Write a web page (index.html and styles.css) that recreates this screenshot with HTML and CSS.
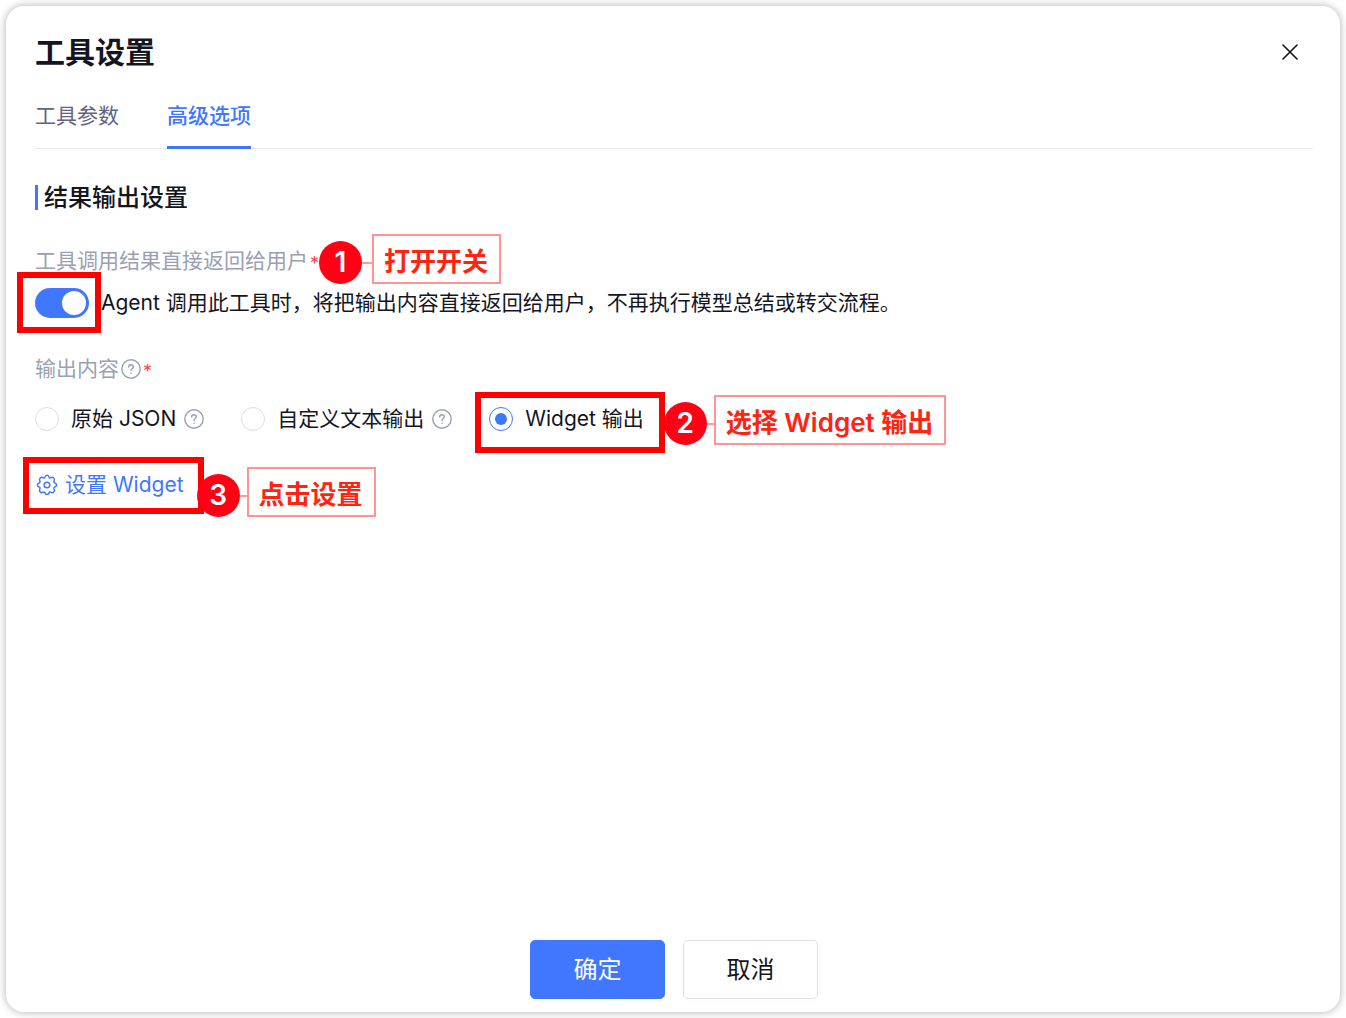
FILE: index.html
```html
<!DOCTYPE html>
<html lang="zh-CN">
<head>
  <meta charset="UTF-8">
  <meta name="viewport" content="width=device-width, initial-scale=1.0">
  <title>工具设置</title>
  <link rel="stylesheet" href="styles.css">
</head>
<body>
  <main class="dialog">
    <header class="dialog-header">
      <h1>工具设置</h1>
      <button class="close-btn" type="button" aria-label="关闭">
        <svg width="16" height="16" viewBox="0 0 16 16" fill="none" stroke="currentColor" stroke-width="1.6" stroke-linecap="round">
          <path d="M1 1l14 14M15 1L1 15"/>
        </svg>
      </button>
    </header>

    <nav class="tabs">
      <a href="#params" class="tab">工具参数</a>
      <a href="#advanced" class="tab active">高级选项</a>
    </nav>

    <section class="settings">
      <h2>结果输出设置</h2>

      <div class="field">
        <div class="field-label">
          <label for="direct-return">工具调用结果直接返回给用户</label>
          <span class="required">*</span>
          <div class="callout callout-switch">
            <span class="badge">1</span>
            <span class="line"></span>
            <span class="tip">打开开关</span>
          </div>
        </div>
        <div class="switch-row">
          <span class="marked marked-switch">
            <input class="switch" type="checkbox" role="switch" id="direct-return" checked>
          </span>
          <span>Agent 调用此工具时，将把输出内容直接返回给用户，不再执行模型总结或转交流程。</span>
        </div>
      </div>

      <div class="field">
        <div class="field-label">
          <span>输出内容</span>
          <svg class="help" width="20" height="20" viewBox="0 0 20 20" fill="none" stroke="currentColor" stroke-width="1.4" stroke-linecap="round" stroke-linejoin="round">
            <circle cx="10" cy="10" r="9.2"/>
            <path d="M7.7 8.1C7.7 6.7 8.7 5.8 10 5.8s2.3.9 2.3 2.1c0 1.6-2.3 1.8-2.3 3.6M10 14.1v.2"/>
          </svg>
          <span class="required">*</span>
        </div>
        <div class="radio-row">
          <div class="option">
            <input class="radio" type="radio" name="output" id="output-json">
            <label for="output-json">原始 JSON</label>
            <svg class="help" width="20" height="20" viewBox="0 0 20 20" fill="none" stroke="currentColor" stroke-width="1.4" stroke-linecap="round" stroke-linejoin="round">
              <circle cx="10" cy="10" r="9.2"/>
              <path d="M7.7 8.1C7.7 6.7 8.7 5.8 10 5.8s2.3.9 2.3 2.1c0 1.6-2.3 1.8-2.3 3.6M10 14.1v.2"/>
            </svg>
          </div>
          <div class="option">
            <input class="radio" type="radio" name="output" id="output-text">
            <label for="output-text">自定义文本输出</label>
            <svg class="help" width="20" height="20" viewBox="0 0 20 20" fill="none" stroke="currentColor" stroke-width="1.4" stroke-linecap="round" stroke-linejoin="round">
              <circle cx="10" cy="10" r="9.2"/>
              <path d="M7.7 8.1C7.7 6.7 8.7 5.8 10 5.8s2.3.9 2.3 2.1c0 1.6-2.3 1.8-2.3 3.6M10 14.1v.2"/>
            </svg>
          </div>
          <div class="option marked marked-option">
            <input class="radio" type="radio" name="output" id="output-widget" checked>
            <label for="output-widget">Widget 输出</label>
            <div class="callout callout-option">
              <span class="badge">2</span>
              <span class="line"></span>
              <span class="tip">选择 Widget 输出</span>
            </div>
          </div>
        </div>
      </div>

      <div class="widget-row marked marked-widget">
        <button class="link-btn" type="button">
          <svg width="24" height="24" viewBox="0 0 24 24" fill="none" stroke="currentColor" stroke-width="1.5" stroke-linejoin="round">
            <path d="M9.9 4.3Q10.4 2.3 12 2.3T14.1 4.3Q14.5 5.3 15.5 4.8Q17.4 3.7 18.7 5T19 8.4Q18.6 9.5 19.7 9.9Q21.6 10.4 21.6 12T19.7 14.1Q18.6 14.5 19 15.5Q20 17.5 18.7 18.9T15.5 19.2Q14.5 18.7 14.1 19.7Q13.6 21.6 12 21.6T9.9 19.7Q9.5 18.7 8.5 19.2Q6.5 20.2 5.2 18.9T4.9 15.5Q5.4 14.5 4.3 14.1Q2.4 13.6 2.4 12T4.3 9.9Q5.4 9.5 4.9 8.4Q3.9 6.4 5.2 5T8.5 4.8Q9.5 5.3 9.9 4.3Z"/>
            <circle cx="12" cy="12" r="2.8"/>
          </svg>
          设置 Widget
        </button>
        <div class="callout callout-widget">
          <span class="badge">3</span>
          <span class="line"></span>
          <span class="tip">点击设置</span>
        </div>
      </div>
    </section>

    <footer class="dialog-footer">
      <button class="btn btn-primary" type="button">确定</button>
      <button class="btn" type="button">取消</button>
    </footer>
  </main>
</body>
</html>
```
FILE: styles.css
```css
* {
  box-sizing: border-box;
}

body {
  margin: 0;
  padding: 6px;
  min-height: 100vh;
  display: flex;
  background: #fff;
  color: #14151f;
  font-family: Inter, "Noto Sans CJK SC", sans-serif;
  font-size: 21px;
  line-height: 30px;
}

button {
  font-family: inherit;
  font-size: inherit;
  line-height: inherit;
  cursor: pointer;
}

.dialog {
  flex: 1;
  display: flex;
  flex-direction: column;
  padding: 26px 27px 13px 29px;
  background: #fff;
  border-radius: 18px;
  box-shadow: 0 0 8px rgba(0, 0, 0, 0.32);
}

.dialog-header {
  display: flex;
  justify-content: space-between;
  align-items: center;
  margin-bottom: 29px;
}

h1 {
  margin: 0;
  font-size: 30px;
  line-height: 40px;
  font-weight: 600;
}

.close-btn {
  display: flex;
  justify-content: center;
  align-items: center;
  width: 46px;
  height: 40px;
  padding: 0;
  border: none;
  background: none;
  color: #14151f;
}

.tabs {
  display: flex;
  gap: 48px;
  border-bottom: 1px solid #e8eaf2;
}

.tab {
  margin-bottom: -1px;
  padding-bottom: 15px;
  border-bottom: 3px solid transparent;
  color: #5f6480;
  text-decoration: none;
}

.tab.active {
  color: #4176ff;
  border-color: #4176ff;
  font-weight: 500;
}

.settings {
  display: flex;
  flex-direction: column;
  align-items: flex-start;
  gap: 36px;
  padding: 36px 0;
}

h2 {
  margin: 0;
  padding-left: 6px;
  border-left: 3px solid #4176ff;
  font-size: 24px;
  line-height: 25px;
  font-weight: 500;
}

.field-label {
  position: relative;
  display: flex;
  align-items: center;
  width: max-content;
  color: #9a9fb3;
}

.required {
  padding: 6px 0 0 2px;
  color: #f54a4a;
  font-size: 18px;
  line-height: 24px;
}

.help {
  color: #9a9fb3;
}

.field-label .help {
  margin-left: 2px;
}

.switch-row {
  display: flex;
  align-items: center;
  gap: 12px;
  margin-top: 12px;
}

.switch {
  appearance: none;
  display: block;
  width: 54px;
  height: 30px;
  margin: 0;
  padding: 3px;
  border-radius: 15px;
  background: #c9ccd9;
}

.switch::before {
  content: "";
  display: block;
  width: 24px;
  height: 24px;
  border-radius: 50%;
  background: #fff;
}

.switch:checked {
  background: #4176ff;
}

.switch:checked::before {
  margin-left: auto;
}

.radio-row {
  display: flex;
  gap: 37px;
  margin-top: 20px;
}

.option {
  display: flex;
  align-items: center;
}

.option .help {
  margin-left: 8px;
}

.radio {
  appearance: none;
  display: grid;
  place-items: center;
  width: 24px;
  height: 24px;
  margin: 0 12px 0 0;
  border: 1px solid #dcdee8;
  border-radius: 50%;
}

.radio:checked {
  border-color: #4176ff;
}

.radio:checked::before {
  content: "";
  width: 12px;
  height: 12px;
  border-radius: 50%;
  background: #4176ff;
}

.link-btn {
  display: flex;
  align-items: center;
  gap: 6px;
  padding: 0;
  border: none;
  background: none;
  color: #4176ff;
}

/* red frames around the marked controls */
.marked {
  position: relative;
}

.marked::after {
  content: "";
  position: absolute;
  border: 6px solid #f00;
  pointer-events: none;
}

.marked-switch::after {
  inset: -16px -12px -15px -18px;
}

.marked-option::after {
  inset: -12px -21px -19px -14px;
}

.marked-widget::after {
  inset: -13px -20px -14px -12px;
}

/* numbered callouts */
.callout {
  position: absolute;
  z-index: 1;
  display: flex;
  align-items: flex-end;
  white-space: nowrap;
}

.callout-switch {
  left: 100%;
  bottom: -8px;
}

.callout-option {
  left: calc(100% + 20px);
  bottom: -11px;
}

.callout-widget {
  left: calc(100% + 13px);
  bottom: -17px;
}

.badge {
  width: 43px;
  height: 43px;
  border-radius: 50%;
  background: #ff0015;
  color: #fff;
  font-size: 28px;
  line-height: 43px;
  font-weight: 600;
  text-align: center;
}

.line {
  width: 7px;
  height: 2px;
  margin-bottom: 20px;
  background: #ff9a98;
}

.callout-switch .line {
  width: 10px;
}

.tip {
  padding: 8px 11px 2px 10px;
  border: 2px solid #ff9492;
  color: #ff2412;
  font-size: 26px;
  line-height: 36px;
  font-weight: 600;
}

.dialog-footer {
  display: flex;
  justify-content: center;
  gap: 18px;
  margin-top: auto;
}

.btn {
  min-width: 135px;
  height: 59px;
  border: 1px solid #dfe0e9;
  border-radius: 5px;
  background: #fff;
  color: #14151f;
  font-size: 24px;
}

.btn-primary {
  border-color: #4176ff;
  background: #4176ff;
  color: #fff;
}
```
